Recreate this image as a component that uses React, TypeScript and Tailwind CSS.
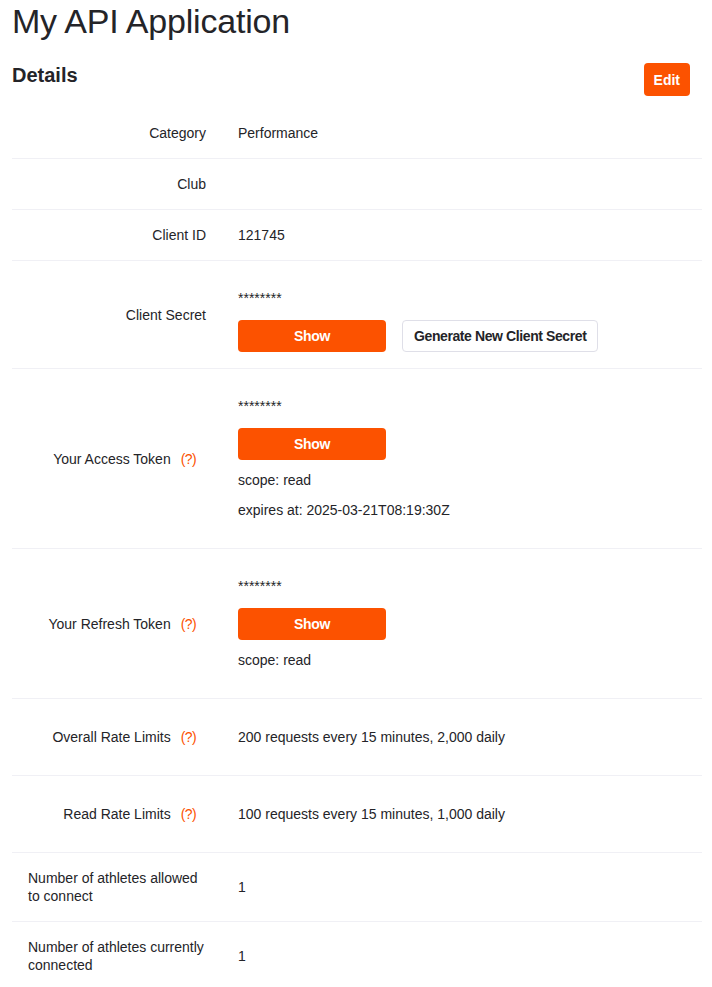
const font = { fontFamily: '"Liberation Sans", Arial, sans-serif' };

const Help = () => (
  <span className="mx-[10px] tracking-[-0.6px] text-[#fc5200]">(?)</span>
);

const ShowButton = () => (
  <button className="flex h-8 w-[148px] items-center justify-center rounded-[4px] bg-[#fc5200] text-sm font-semibold tracking-[-0.3px] text-white">
    Show
  </button>
);

const Row = ({
  label,
  help,
  left,
  children,
}: {
  label: string;
  help?: boolean;
  left?: boolean;
  children?: React.ReactNode;
}) => (
  <tr className="border-b border-[#f0f0f5]">
    <td
      className={`w-[210px] px-4 py-4 align-middle leading-[18px] ${left ? 'text-left' : 'text-right'}`}
    >
      {label}
      {help && <Help />}
    </td>
    <td className="px-4 py-4 align-middle leading-[18px]">{children}</td>
  </tr>
);

export default function App() {
  return (
    <div className="min-h-screen bg-white pl-3 pr-[10px] text-sm text-[#242428]" style={font}>
      <h1 className="text-[34px] leading-[42px] tracking-[-0.2px]">My API Application</h1>

      <div className="mt-[21px] flex items-start justify-between pr-3">
        <h2 className="text-[20px] font-semibold leading-[24px]">Details</h2>
        <button className="h-[33px] rounded-[4px] bg-[#fc5200] px-[10px] text-sm font-semibold text-white">
          Edit
        </button>
      </div>

      <table className="mt-[12px] w-full border-collapse">
        <tbody>
          <Row label="Category">Performance</Row>
          <Row label="Club" />
          <Row label="Client ID">121745</Row>
          <Row label="Client Secret">
            <p className="mt-3">********</p>
            <div className="mt-[13px] flex gap-4">
              <ShowButton />
              <button className="flex h-8 items-center rounded-[4px] border border-[#dfdfe8] bg-white px-[11px] text-sm font-semibold tracking-[-0.4px]">
                Generate New Client Secret
              </button>
            </div>
          </Row>
          <Row label="Your Access Token" help>
            <p className="mt-3">********</p>
            <div className="mt-[13px]">
              <ShowButton />
            </div>
            <p className="mt-[11px]">scope: read</p>
            <p className="mt-3 mb-[13px]">expires at: 2025-03-21T08:19:30Z</p>
          </Row>
          <Row label="Your Refresh Token" help>
            <p className="mt-3">********</p>
            <div className="mt-[13px]">
              <ShowButton />
            </div>
            <p className="mt-[11px] mb-[13px]">scope: read</p>
          </Row>
          <Row label="Overall Rate Limits" help>
            <p className="my-[13px]">200 requests every 15 minutes, 2,000 daily</p>
          </Row>
          <Row label="Read Rate Limits" help>
            <p className="my-[13px]">100 requests every 15 minutes, 1,000 daily</p>
          </Row>
          <Row label="Number of athletes allowed to connect" left>
            1
          </Row>
          <Row label="Number of athletes currently connected" left>
            1
          </Row>
        </tbody>
      </table>
    </div>
  );
}
